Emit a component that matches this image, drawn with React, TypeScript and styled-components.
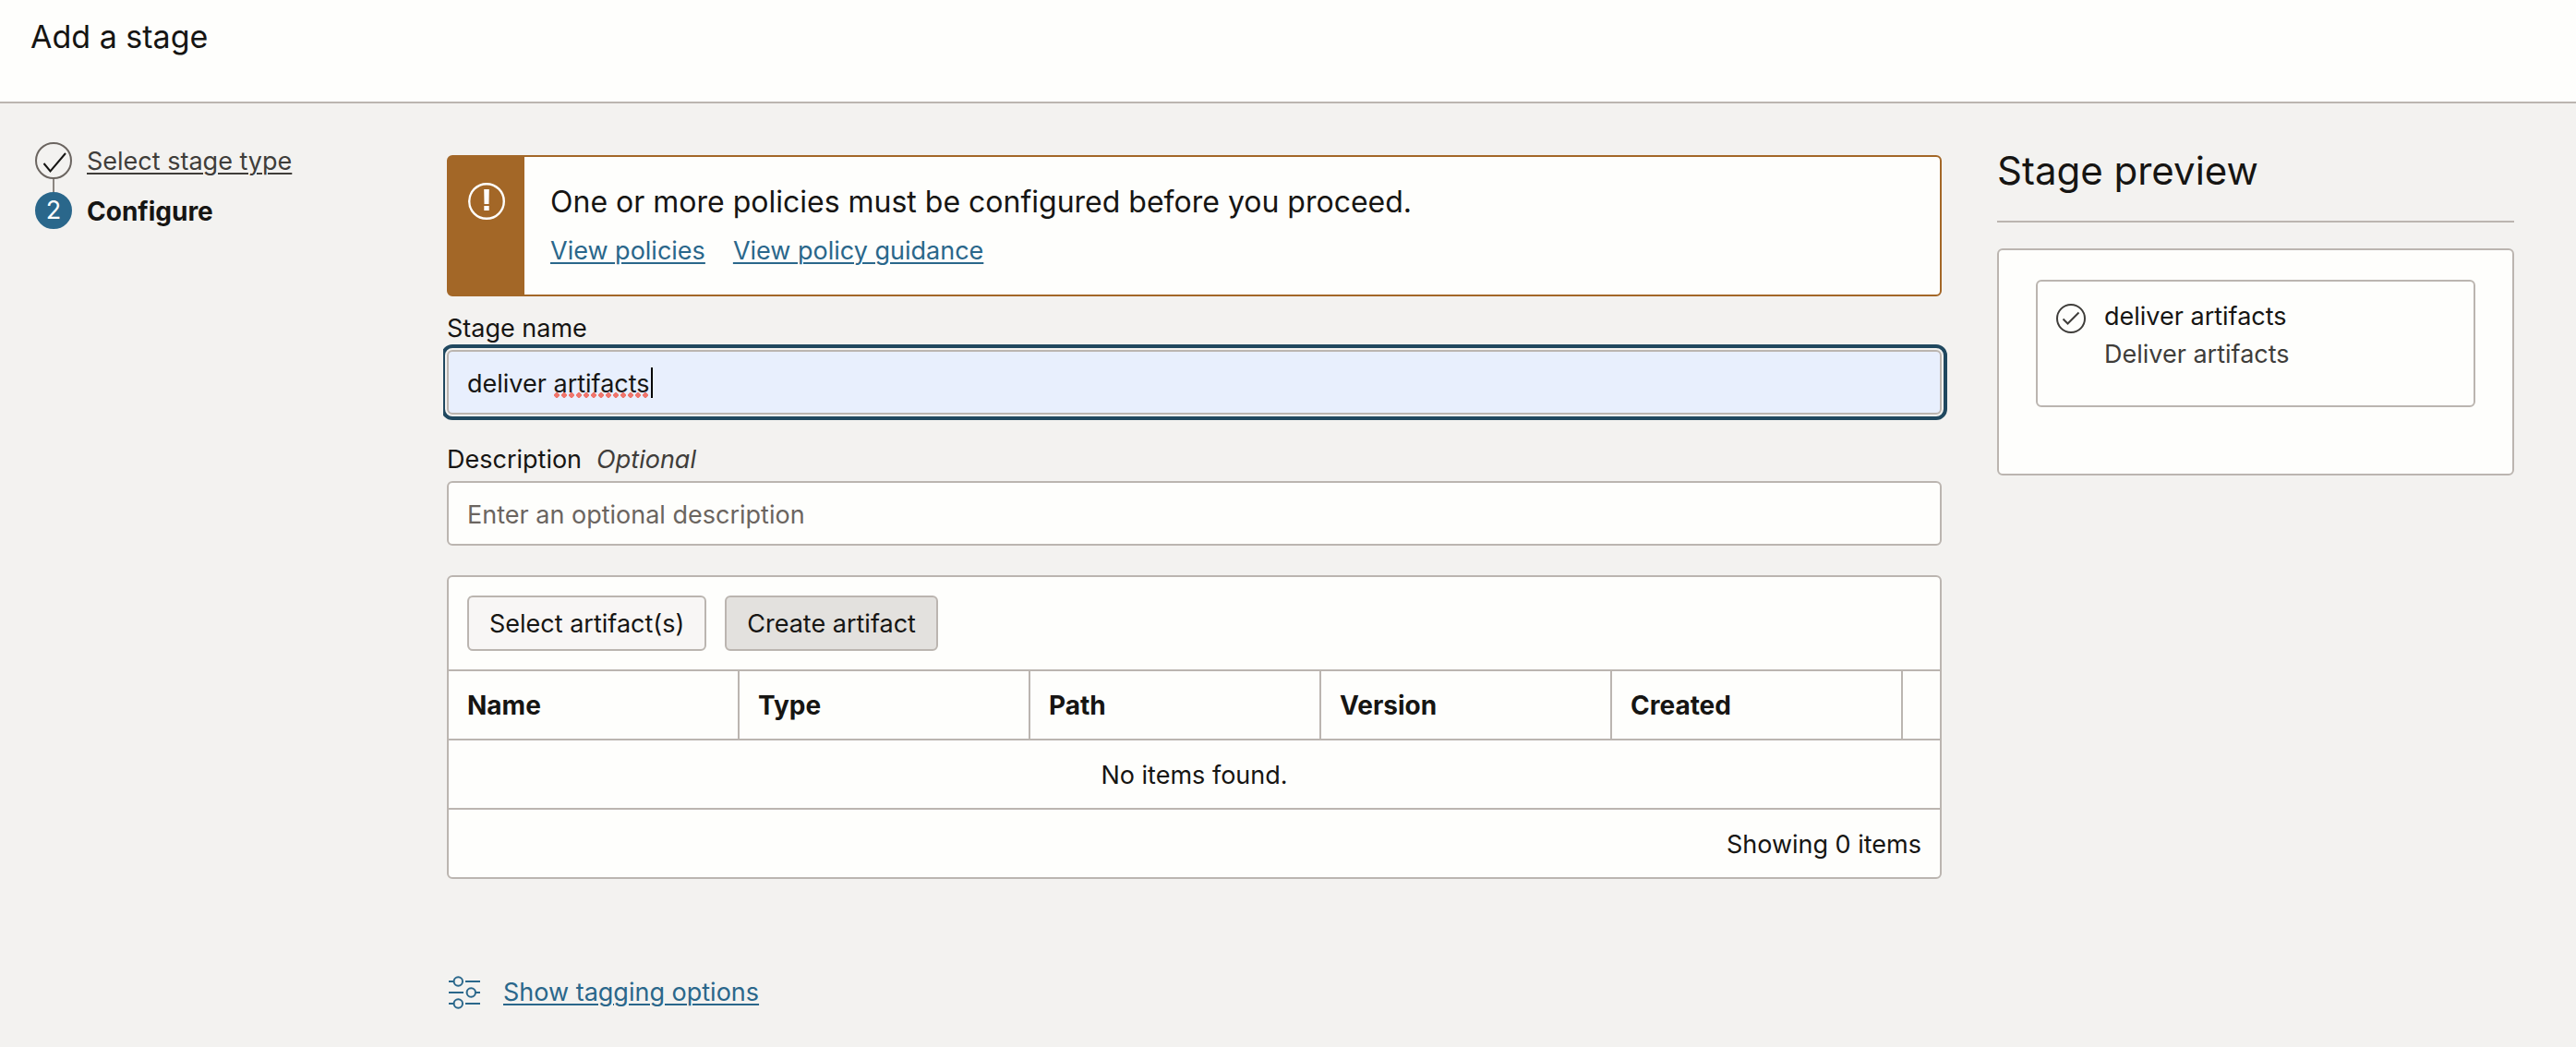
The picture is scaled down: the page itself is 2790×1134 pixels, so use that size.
import React, { useState } from "react";
import styled, { createGlobalStyle } from "styled-components";

const color = {
  text: "#161513",
  muted: "#3f3d3a",
  hint: "#6b6560",
  line: "#bbb5b0",
  surface: "#fefefc",
  page: "#f3f2f0",
  link: "#2a678b",
  warning: "#a36727",
  focus: "#20485f",
};

const GlobalStyle = createGlobalStyle`
  *, *::before, *::after { box-sizing: border-box; }
  html, body { margin: 0; min-height: 100%; background: ${color.page}; }
  body, input, button {
    font-family: Inter, "Liberation Sans", Arial, sans-serif;
    font-size: 27px;
    line-height: 40px;
    color: ${color.text};
  }
`;

const Header = styled.header`
  padding: 16px 33px 46px;
  background: ${color.surface};
  border-bottom: 2px solid ${color.line};
`;

const PageTitle = styled.h1`
  margin: 0;
  font-size: 34px;
  font-weight: 400;
  line-height: 48px;
`;

const Layout = styled.div`
  display: grid;
  grid-template-columns: 440px minmax(0, 1fr) 560px;
  align-items: start;
  padding: 42px 67px 40px 38px;
`;

const Steps = styled.ol`
  margin: 0;
  padding: 0;
  list-style: none;
  display: flex;
  flex-direction: column;
  gap: 14px;
`;

const Step = styled.li`
  position: relative;
  display: flex;
  gap: 16px;
  height: 40px;

  & + &::before {
    content: "";
    position: absolute;
    left: 19px;
    bottom: 100%;
    width: 2px;
    height: 14px;
    background: #8b8580;
  }
`;

const StepLabel = styled.span<{ $current?: boolean }>`
  padding-top: 1px;
  font-size: ${(p) => (p.$current ? "28px" : "27px")};
  font-weight: ${(p) => (p.$current ? 700 : 400)};
`;

const Marker = styled.span<{ $current?: boolean }>`
  display: flex;
  align-items: center;
  justify-content: center;
  width: 40px;
  height: 40px;
  border-radius: 50%;
  border: 2px solid ${(p) => (p.$current ? color.link : color.hint)};
  background: ${(p) => (p.$current ? color.link : "transparent")};
  color: ${color.surface};
`;

const Link = styled.a<{ $muted?: boolean }>`
  color: ${(p) => (p.$muted ? color.muted : color.link)};
  text-decoration: underline;
  text-decoration-thickness: 2px;
  text-underline-offset: 3px;
`;

const Main = styled.main`
  display: flex;
  flex-direction: column;
  padding: 14px 60px 0 6px;
`;

const Alert = styled.section`
  display: flex;
  min-height: 153px;
  border: 2px solid ${color.warning};
  border-radius: 6px;
  background: ${color.surface};
`;

const AlertIcon = styled.div`
  display: flex;
  justify-content: center;
  width: 82px;
  padding-top: 28px;
  background: ${color.warning};
`;

const AlertBody = styled.div`
  padding: 25px 28px 24px;
`;

const AlertTitle = styled.p`
  margin: 0;
  font-size: 32px;
  line-height: 48px;
`;

const AlertLinks = styled.nav`
  display: flex;
  gap: 30px;
  padding-top: 9px;
`;

const Field = styled.div`
  display: flex;
  flex-direction: column;
  padding-top: 15px;

  & + & { padding-top: 29px; }
`;

const Label = styled.label`
  display: flex;
  gap: 16px;
  padding-bottom: 3px;
`;

const Optional = styled.em`
  color: ${color.muted};
`;

const FocusFrame = styled.div`
  position: relative;
  margin: -6px -6px -6px -4px;
  padding: 6px 6px 6px 4px;
  overflow: hidden;
`;

const TextInput = styled.input<{ $active?: boolean }>`
  display: block;
  width: 100%;
  height: 70px;
  padding: 2px 20px 0;
  border: 2px solid ${color.line};
  border-radius: 6px;
  background: ${(p) => (p.$active ? "#e8effd" : color.surface)};
  outline: ${(p) => (p.$active ? `4px solid ${color.focus}` : "none")};
  outline-offset: 2px;

  &::placeholder { color: ${color.hint}; opacity: 1; }
`;

const Misspelling = styled.span`
  position: absolute;
  left: 120px;
  bottom: 24px;
  width: 102px;
  height: 6px;
  background: radial-gradient(circle at 3px 3px, #f0766c 60%, transparent 75%) 0 0 / 8px 6px;
  background-image: radial-gradient(circle 3px at 3px 3px, #f0766c 85%, transparent 100%);
`;

const Caret = styled.span`
  position: absolute;
  left: 225px;
  top: 25px;
  width: 2px;
  height: 33px;
  background: #000;
`;

const Panel = styled.section`
  margin-top: 32px;
  border: 2px solid ${color.line};
  border-radius: 6px;
  background: ${color.surface};
`;

const Toolbar = styled.div`
  display: flex;
  gap: 20px;
  padding: 20px;
`;

const Button = styled.button<{ $filled?: boolean }>`
  height: 60px;
  padding: 2px 22px 0;
  border: 2px solid ${color.line};
  border-radius: 6px;
  background: ${(p) => (p.$filled ? "#e3e1de" : "#f8f6f5")};
`;

const Table = styled.table`
  width: 100%;
  table-layout: fixed;
  border-collapse: separate;
  border-spacing: 0;
`;

const ColumnHead = styled.th`
  height: 75px;
  padding: 1px 20px 0;
  border-top: 2px solid ${color.line};
  border-right: 2px solid ${color.line};
  text-align: left;
  font-size: 28px;
  font-weight: 700;
`;

const MenuHead = styled.td`
  width: 40px;
  border-top: 2px solid ${color.line};
`;

const WideCell = styled.td<{ $align: "center" | "right" }>`
  height: 75px;
  padding: 2px 20px 0;
  border-top: 2px solid ${color.line};
  text-align: ${(p) => p.$align};
`;

const Tagging = styled.div`
  display: flex;
  align-items: center;
  gap: 25px;
  padding: 103px 0 0 2px;
`;

const PreviewTitle = styled.h2`
  margin: 0;
  padding: 2px 0 26px;
  border-bottom: 2px solid ${color.line};
  font-size: 42px;
  font-weight: 400;
  line-height: 57px;
`;

const PreviewCard = styled.div`
  margin-top: 28px;
  padding: 32px 40px 72px;
  border: 2px solid ${color.line};
  border-radius: 6px;
  background: ${color.surface};
`;

const StageCard = styled.article`
  display: flex;
  gap: 20px;
  min-height: 138px;
  padding: 17px 20px;
  border: 2px solid ${color.line};
  border-radius: 6px;

  svg { margin-top: 7px; }
  p { margin: 0; line-height: 41px; }
  p + p { color: ${color.muted}; }
`;

const CheckMark = () => (
  <svg width="36" height="36" viewBox="0 0 36 36" fill="none" stroke={color.text} strokeWidth="2" aria-hidden="true">
    <path d="M7.500 21 L14.500 29.500 L31 10" />
  </svg>
);

const WarningIcon = () => (
  <svg width="40" height="40" viewBox="0 0 40 40" fill="none" aria-hidden="true">
    <circle cx="20" cy="20" r="18.800" stroke={color.surface} strokeWidth="2.400" />
    <path d="M17.200 7h5.600l-.3 16h-5z M17.300 25h5.400v5h-5.400z" fill={color.surface} />
  </svg>
);

const StageIcon = () => (
  <svg width="32" height="32" viewBox="0 0 32 32" fill="none" stroke={color.muted} strokeWidth="2" aria-hidden="true">
    <circle cx="16" cy="16" r="15" />
    <path d="M7.500 16.500 L12.500 21.500 L24.500 9.500" />
  </svg>
);

const SlidersIcon = () => (
  <svg width="34" height="36" viewBox="0 0 34 36" fill="none" stroke={color.link} strokeWidth="2" aria-hidden="true">
    <path d="M0 6h6M18 6h16M0 18h16M29 18h5M0 30h6M18 30h16" />
    <circle cx="10.300" cy="6" r="4.700" />
    <circle cx="24.300" cy="18" r="4.700" />
    <circle cx="10.300" cy="30" r="4.700" />
  </svg>
);

const columns = ["Name", "Type", "Path", "Version", "Created"];

export default function App() {
  const [name, setName] = useState("deliver artifacts");
  const [description, setDescription] = useState("");

  return (
    <>
      <GlobalStyle />
      <Header>
        <PageTitle>Add a stage</PageTitle>
      </Header>
      <Layout>
        <Steps>
          <Step>
            <Marker><CheckMark /></Marker>
            <StepLabel><Link href="#type" $muted>Select stage type</Link></StepLabel>
          </Step>
          <Step aria-current="step">
            <Marker $current>2</Marker>
            <StepLabel $current>Configure</StepLabel>
          </Step>
        </Steps>

        <Main>
          <Alert>
            <AlertIcon><WarningIcon /></AlertIcon>
            <AlertBody>
              <AlertTitle>One or more policies must be configured before you proceed.</AlertTitle>
              <AlertLinks>
                <Link href="#policies">View policies</Link>
                <Link href="#guidance">View policy guidance</Link>
              </AlertLinks>
            </AlertBody>
          </Alert>

          <Field>
            <Label htmlFor="stage-name">Stage name</Label>
            <FocusFrame>
              <TextInput id="stage-name" $active spellCheck={false} value={name} onChange={(e) => setName(e.target.value)} />
              <Misspelling />
              <Caret />
            </FocusFrame>
          </Field>
          <Field>
            <Label htmlFor="description">Description <Optional>Optional</Optional></Label>
            <TextInput
              id="description"
              placeholder="Enter an optional description"
              value={description}
              onChange={(e) => setDescription(e.target.value)}
            />
          </Field>

          <Panel>
            <Toolbar>
              <Button type="button">Select artifact(s)</Button>
              <Button type="button" $filled>Create artifact</Button>
            </Toolbar>
            <Table>
              <thead>
                <tr>
                  {columns.map((c) => <ColumnHead key={c} scope="col">{c}</ColumnHead>)}
                  <MenuHead />
                </tr>
              </thead>
              <tbody>
                <tr><WideCell $align="center" colSpan={6}>No items found.</WideCell></tr>
              </tbody>
              <tfoot>
                <tr><WideCell $align="right" colSpan={6}>Showing 0 items</WideCell></tr>
              </tfoot>
            </Table>
          </Panel>

          <Tagging>
            <SlidersIcon />
            <Link href="#tagging">Show tagging options</Link>
          </Tagging>
        </Main>

        <aside>
          <PreviewTitle>Stage preview</PreviewTitle>
          <PreviewCard>
            <StageCard>
              <StageIcon />
              <div>
                <p>{name}</p>
                <p>Deliver artifacts</p>
              </div>
            </StageCard>
          </PreviewCard>
        </aside>
      </Layout>
    </>
  );
}
